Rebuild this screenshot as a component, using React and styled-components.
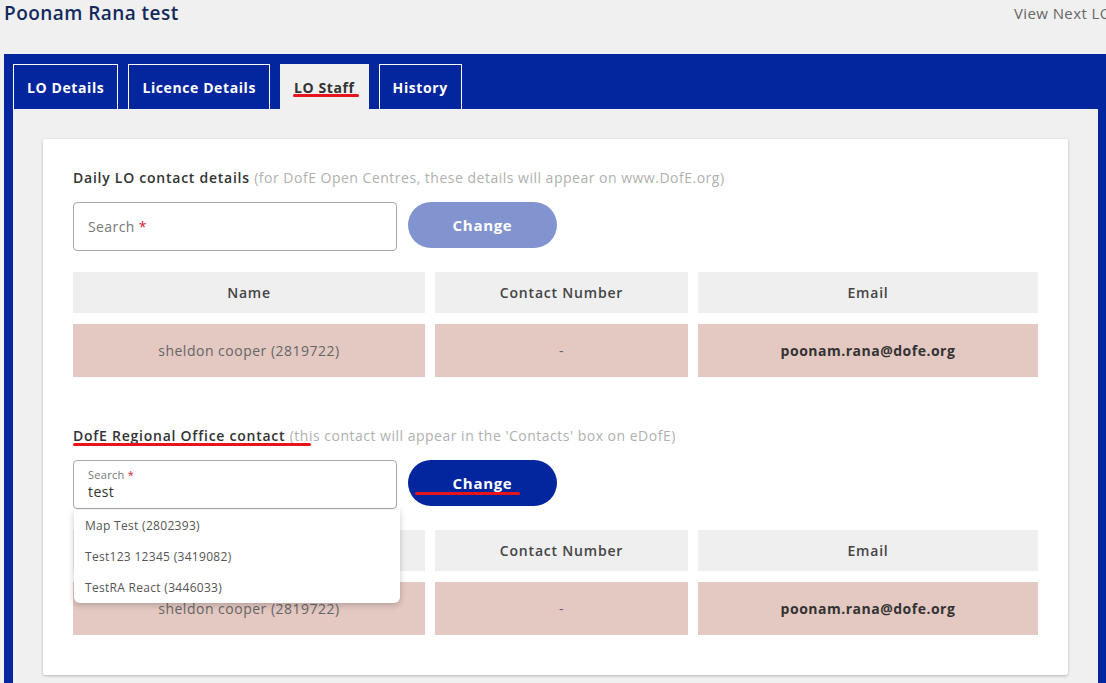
import React from "react";
import styled, { createGlobalStyle } from "styled-components";

const Global = createGlobalStyle`
  html, body { margin: 0; padding: 0; background: #f0f0f0; overflow-x: hidden; }
  body { font-family: "Open Sans", "Noto Sans", sans-serif; color: #333; }
  * { box-sizing: border-box; }
`;

const BLUE = "#03259e";

const Page = styled.div`
  width: 1106px;
  padding-left: 4px;
  overflow: hidden;
`;

const Header = styled.div`
  display: flex;
  justify-content: space-between;
  align-items: flex-start;
  height: 54px;
`;

const Title = styled.h1`
  margin: 0;
  font-size: 19px;
  line-height: 26px;
  font-weight: 600;
  letter-spacing: 0.45px;
  color: #14295c;
`;

const NextLink = styled.span`
  flex: 0 0 92px;
  min-width: 0;
  font-size: 15px;
  line-height: 26px;
  letter-spacing: 0.4px;
  color: #666;
  white-space: nowrap;
`;

const Panel = styled.div`
  background: ${BLUE};
  padding: 0 8px 0 9px;
`;

const TabBar = styled.div`
  display: flex;
  gap: 10px;
  padding-top: 10px;
  height: 55px;
`;

const Tab = styled.div`
  position: relative;
  height: 45px;
  padding: 0 13px;
  display: flex;
  align-items: center;
  font-size: 14px;
  font-weight: 700;
  letter-spacing: 0.6px;
  color: ${(p) => (p.$active ? "#333" : "#fff")};
  background: ${(p) => (p.$active ? "#f0f0f0" : BLUE)};
  border: 1px solid ${(p) => (p.$active ? "#f0f0f0" : "#fff")};
  border-bottom: none;
`;

const Mark = styled.span`
  position: absolute;
  height: 3px;
  border-radius: 2px;
  background: #e8141c;
  left: ${(p) => p.$l}px;
  width: ${(p) => p.$w}px;
  top: ${(p) => p.$t}px;
`;

const Body = styled.div`
  background: #f0f0f0;
  padding: 30px 30px 8px;
`;

const Card = styled.div`
  background: #fff;
  padding: 30px 30px 40px;
  box-shadow: 0 1px 3px rgba(0, 0, 0, 0.25);
  border-radius: 2px;
`;

const Section = styled.section`
  & + & { margin-top: 50px; }
`;

const Heading = styled.div`
  position: relative;
  font-size: 14px;
  line-height: 18px;
  color: #333;
  font-weight: 600;
  letter-spacing: 0.75px;
  white-space: nowrap;
`;

const Note = styled.span`
  font-weight: 400;
  letter-spacing: 0.5px;
  color: #b0b0b0;
`;

const Controls = styled.div`
  display: flex;
  align-items: flex-start;
  gap: 11px;
  margin-top: 15px;
  position: relative;
`;

const InputBox = styled.div`
  position: relative;
  width: 324px;
  height: 49px;
  border: 1px solid #a8a8a8;
  border-radius: 4px;
  padding: 0 14px;
  display: flex;
  flex-direction: column;
  justify-content: center;
  background: #fff;
`;

const Placeholder = styled.span`
  font-size: 14px;
  letter-spacing: 0.4px;
  color: #777;
`;

const Req = styled.span`
  color: #d0223a;
`;

const SmallLabel = styled.span`
  font-size: 11px;
  line-height: 14px;
  letter-spacing: 0.3px;
  color: #777;
`;

const Value = styled.span`
  font-size: 14px;
  line-height: 20px;
  letter-spacing: 0.4px;
  color: #333;
`;

const ChangeButton = styled.button`
  position: relative;
  width: 149px;
  height: 46px;
  border: none;
  border-radius: 23px;
  background: ${(p) => (p.$disabled ? "#8294cf" : BLUE)};
  color: #fff;
  font-family: inherit;
  font-size: 15px;
  font-weight: 700;
  letter-spacing: 0.7px;
`;

const Menu = styled.ul`
  position: absolute;
  top: 49px;
  left: 0;
  width: 326px;
  margin: 0;
  padding: 0;
  list-style: none;
  background: #fff;
  border-radius: 0 0 6px 6px;
  box-shadow: 0 2px 6px rgba(0, 0, 0, 0.22);
  z-index: 2;
`;

const MenuItem = styled.li`
  height: 31px;
  line-height: 31px;
  padding-left: 11px;
  font-size: 12px;
  letter-spacing: 0.3px;
  color: #555;
`;

const Grid = styled.div`
  display: grid;
  grid-template-columns: 352fr 253fr 340fr;
  gap: 11px 10px;
  margin-top: 21px;
`;

const HeadCell = styled.div`
  height: 41px;
  background: #efefef;
  display: flex;
  align-items: center;
  justify-content: center;
  font-size: 14px;
  font-weight: 600;
  letter-spacing: 0.8px;
  color: #444;
`;

const Cell = styled.div`
  height: 53px;
  background: #e4c8c2;
  display: flex;
  align-items: center;
  justify-content: center;
  font-size: 14px;
  letter-spacing: 0.5px;
  font-weight: ${(p) => (p.$bold ? 700 : 400)};
  color: ${(p) => (p.$bold ? "#333" : "#666")};
`;

function ContactTable() {
  return (
    <Grid>
      <HeadCell>Name</HeadCell>
      <HeadCell>Contact Number</HeadCell>
      <HeadCell>Email</HeadCell>
      <Cell>sheldon cooper (2819722)</Cell>
      <Cell>-</Cell>
      <Cell $bold>poonam.rana@dofe.org</Cell>
    </Grid>
  );
}

export default function App() {
  return (
    <Page>
      <Global />
      <Header>
        <Title>Poonam Rana test</Title>
        <NextLink>View Next LO</NextLink>
      </Header>
      <Panel>
        <TabBar>
          <Tab>LO Details</Tab>
          <Tab>Licence Details</Tab>
          <Tab $active>
            LO Staff
            <Mark $l={12} $w={66} $t={29} />
          </Tab>
          <Tab>History</Tab>
        </TabBar>
        <Body>
          <Card>
            <Section>
              <Heading>
                Daily LO contact details{" "}
                <Note>(for DofE Open Centres, these details will appear on www.DofE.org)</Note>
              </Heading>
              <Controls>
                <InputBox>
                  <Placeholder>
                    Search <Req>*</Req>
                  </Placeholder>
                </InputBox>
                <ChangeButton $disabled>Change</ChangeButton>
              </Controls>
              <ContactTable />
            </Section>
            <Section>
              <Heading>
                DofE Regional Office contact{" "}
                <Note>(this contact will appear in the 'Contacts' box on eDofE)</Note>
                <Mark $l={0} $w={238} $t={16} />
              </Heading>
              <Controls>
                <InputBox>
                  <SmallLabel>
                    Search <Req>*</Req>
                  </SmallLabel>
                  <Value>test</Value>
                  <Menu>
                    <MenuItem>Map Test (2802393)</MenuItem>
                    <MenuItem>Test123 12345 (3419082)</MenuItem>
                    <MenuItem>TestRA React (3446033)</MenuItem>
                  </Menu>
                </InputBox>
                <ChangeButton>
                  Change
                  <Mark $l={7} $w={105} $t={32} />
                </ChangeButton>
              </Controls>
              <ContactTable />
            </Section>
          </Card>
        </Body>
      </Panel>
    </Page>
  );
}
